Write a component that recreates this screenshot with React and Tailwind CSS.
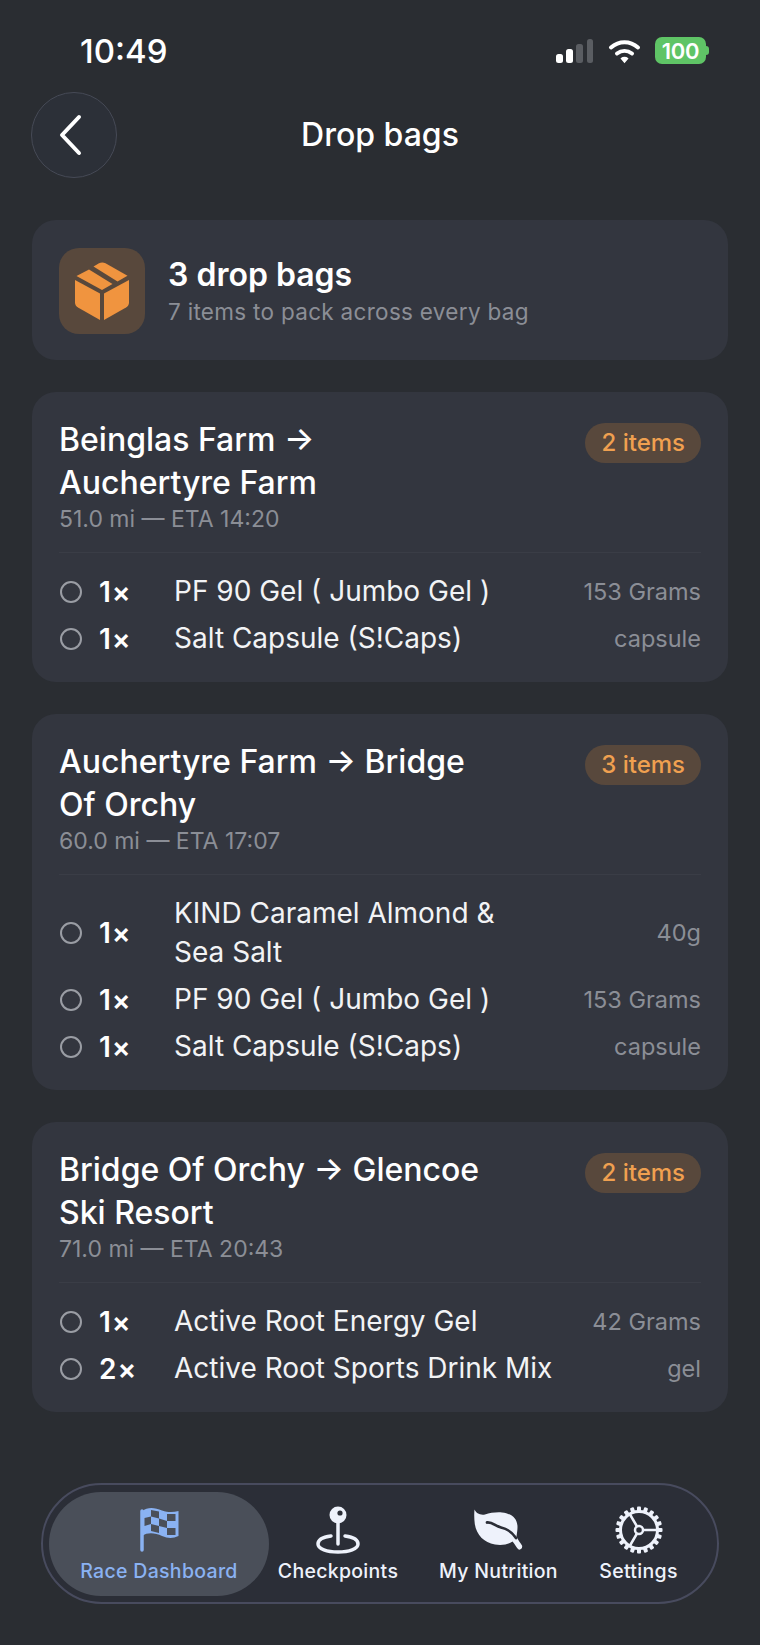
import React from 'react';

const bags = [
  {
    title: 'Beinglas Farm → Auchertyre Farm',
    meta: '51.0 mi — ETA 14:20',
    count: '2 items',
    items: [
      { qty: '1×', name: 'PF 90 Gel ( Jumbo Gel )', unit: '153 Grams' },
      { qty: '1×', name: 'Salt Capsule (S!Caps)', unit: 'capsule' },
    ],
  },
  {
    title: 'Auchertyre Farm → Bridge Of Orchy',
    meta: '60.0 mi — ETA 17:07',
    count: '3 items',
    items: [
      { qty: '1×', name: 'KIND Caramel Almond &\nSea Salt', unit: '40g' },
      { qty: '1×', name: 'PF 90 Gel ( Jumbo Gel )', unit: '153 Grams' },
      { qty: '1×', name: 'Salt Capsule (S!Caps)', unit: 'capsule' },
    ],
  },
  {
    title: 'Bridge Of Orchy → Glencoe Ski Resort',
    meta: '71.0 mi — ETA 20:43',
    count: '2 items',
    items: [
      { qty: '1×', name: 'Active Root Energy Gel', unit: '42 Grams' },
      { qty: '2×', name: 'Active Root Sports Drink Mix', unit: 'gel' },
    ],
  },
];

const StatusIcons = () => (
  <div className="flex items-center gap-[14px]">
    <svg width="38" height="26" viewBox="0 0 38 26">
      <rect x="0" y="16" width="7" height="9" rx="2.5" fill="#fff" />
      <rect x="10" y="11" width="7" height="14" rx="2.5" fill="#fff" />
      <rect x="20" y="6" width="7" height="19" rx="2.5" fill="#5a5d62" />
      <rect x="31" y="1" width="6" height="24" rx="2.5" fill="#5a5d62" />
    </svg>
    <svg width="33" height="26" viewBox="0 0 33 26" fill="none" stroke="#fff" strokeWidth="4" strokeLinecap="round">
      <path d="M3 9.500C11 2.500 22 2.500 30 9.500" />
      <path d="M9 15.500C13.500 12 19.500 12 24 15.500" />
      <path d="M13.500 20.500L16.500 24L19.500 20.500C18 19 15 19 13.500 20.500Z" fill="#fff" strokeWidth="1.500" />
    </svg>
    <div className="flex items-center">
      <div className="w-[51px] h-[27px] rounded-[7px] bg-[#5fc466] flex items-center justify-center text-white text-[22px] font-semibold tracking-[-0.3px] leading-none">
        100
      </div>
      <div className="w-[3px] h-[9px] rounded-r-full bg-[#5fc466]" />
    </div>
  </div>
);

const PackageIcon = () => (
  <svg width="54" height="58" viewBox="0 0 54 58" fill="#f0943f">
    <path d="M18.500 4.500L24 1.200C26 0.200 28.500 0.200 30.500 1.200L52.500 13.800L42.500 19.500Z" />
    <path d="M14 7.500L37.500 22L27 28L1.500 14Z" />
    <path d="M0 18L25 31.500V58L3 45.500C1 44.300 0 42.500 0 40.500Z" />
    <path d="M54 18V40.500C54 42.500 53 44.300 51 45.500L29 58V31.500Z" />
  </svg>
);

const FlagIcon = () => (
  <svg width="40" height="45" viewBox="0 0 40 45">
    <path d="M3 4V43" stroke="#8ab2f2" strokeWidth="3.500" strokeLinecap="round" />
    <path d="M3 4C9 -0.500 16 0.500 23 3.500C29 5.500 34 5.500 39.500 4V29C34 31.500 29 31.500 23 29C16 26 9 25 3 29Z" fill="#8ab2f2" />
    <g fill="#4a4f59">
      <path d="M12 3L20 4.500V11.500L12 9.500Z" />
      <path d="M28 7L36.500 7V14L28 14Z" />
      <path d="M5.500 11L12 9.500V17L5.500 19Z" />
      <path d="M20 11.500L28 14V21L20 19Z" />
      <path d="M12 17L20 19V26L12 24Z" />
      <path d="M28 21L36.500 21V28L28 28Z" />
    </g>
  </svg>
);

const PinIcon = () => (
  <svg width="44" height="48" viewBox="0 0 44 48">
    <circle cx="22" cy="9" r="8.500" fill="#eef2fb" />
    <circle cx="24" cy="7" r="2.600" fill="#2b2e37" />
    <path d="M22 16V38" stroke="#eef2fb" strokeWidth="3.500" strokeLinecap="round" />
    <path d="M15 30C7 31 2 34 2 38C2 43 11 46 22 46C33 46 42 43 42 38C42 34 37 31 29 30" fill="none" stroke="#eef2fb" strokeWidth="3.500" strokeLinecap="round" />
  </svg>
);

const LeafIcon = () => (
  <svg width="49" height="42" viewBox="0 0 49 42">
    <path d="M0.500 0.500C2 4 6 6.500 11 5.500C16 4 22 3 28 3.500C37 4.500 43.500 9 43.500 18C43.500 21 43 24 42.500 27.500C44 31 46.500 34 48 36.500C49 39 46 42 44 40C42 38 40.500 34.500 38.500 32.500C34 35.500 28 36.500 21 35.500C10 33.500 2.500 26 0.800 15C0.200 10 0 5 0.500 0.500Z" fill="#eef2fb" />
    <path d="M13 13.500C19 13 21 17 27 18.500C33 20 37 22 42 29" fill="none" stroke="#2b2e37" strokeWidth="2.800" strokeLinecap="round" />
  </svg>
);

const GearIcon = () => {
  const teeth = Array.from({ length: 20 }, (_, i) => i * 18);
  return (
    <svg width="48" height="48" viewBox="0 0 48 48" fill="none" stroke="#eef2fb">
      <circle cx="24" cy="24" r="18.500" strokeWidth="3" />
      {teeth.map((deg) => (
        <rect key={deg} x="22" y="0.500" width="4" height="5" rx="1" fill="#eef2fb" stroke="none" transform={`rotate(${deg} 24 24)`} />
      ))}
      <circle cx="24" cy="24" r="4" strokeWidth="2.500" />
      <path d="M28 24H42M22 20.500L15 8.500M22 27.500L15 39.500" strokeWidth="2.500" />
    </svg>
  );
};

const BagCard = ({ bag }) => (
  <div className="rounded-[24px] bg-[#33363f] px-[27px] pt-[26px] pb-[24px]">
    <div className="flex justify-between items-start pb-[19px] border-b border-[#3a3d46]">
      <div>
        <div className="w-[425px] text-[32px] leading-[43px] font-medium text-white">{bag.title}</div>
        <div className="text-[23px] leading-[28px] text-[#8b8e96] mt-[1px]">{bag.meta}</div>
      </div>
      <div className="mt-[5px] h-[40px] px-[16px] rounded-full bg-[#58483c] text-[#f0a050] text-[24px] font-medium flex items-center">
        {bag.count}
      </div>
    </div>
    <div className="pt-[19px] flex flex-col gap-[8px]">
      {bag.items.map((item) => (
        <div key={item.name} className="flex items-center min-h-[39px]">
          <div className="w-[22px] h-[22px] rounded-full border-2 border-[#9a9da4] shrink-0 ml-[1px]" />
          <div className="w-[92px] pl-[17px] text-[28px] leading-none font-semibold tracking-[1px] text-white shrink-0">{item.qty}</div>
          <div className="w-[385px] text-[28px] leading-[39px] text-[#f2f3f5] whitespace-pre-line">{item.name}</div>
          <div className="ml-auto text-[23.500px] text-[#8b8e96]">{item.unit}</div>
        </div>
      ))}
    </div>
  </div>
);

const NavItem = ({ icon, label, className, labelClass = 'text-[#eef2fb]' }) => (
  <div className={`h-[104px] pb-[13px] flex flex-col items-center justify-end ${className}`}>
    <div className="h-[50px] flex items-center justify-center">{icon}</div>
    <div className={`mt-[4px] text-[19.500px] leading-[24px] font-medium tracking-[0.3px] whitespace-nowrap ${labelClass}`}>{label}</div>
  </div>
);

export default function App() {
  return (
    <div className="w-[760px] h-[1645px] bg-[#2a2d32] flex flex-col overflow-hidden" style={{ fontFamily: 'Inter, sans-serif' }}>
      {/* Status bar */}
      <div className="h-[92px] pt-[32px] pl-[80px] pr-[51px] flex items-start justify-between">
        <div className="text-[33px] leading-[38px] font-medium text-white">10:49</div>
        <div className="pt-[5px]"><StatusIcons /></div>
      </div>

      {/* Header */}
      <div className="relative h-[86px] mx-[31px] flex items-center justify-center">
        <div className="absolute left-0 top-0 w-[86px] h-[86px] rounded-full border border-[#464a56] bg-[#2c3038] flex items-center justify-center">
          <svg width="30" height="42" viewBox="0 0 30 42" fill="none" stroke="#fff" strokeWidth="4" strokeLinecap="round" strokeLinejoin="round" className="mr-[8px]">
            <path d="M24 3L7 21L24 39" />
          </svg>
        </div>
        <div className="text-[32px] font-medium text-white">Drop bags</div>
      </div>

      <div className="mt-[42px] px-[32px] flex flex-col gap-[32px]">
        {/* Summary */}
        <div className="h-[140px] pt-[2px] rounded-[24px] bg-[#33363f] pl-[27px] flex items-center gap-[23px]">
          <div className="w-[86px] h-[86px] rounded-[20px] bg-[#58483c] flex items-center justify-center">
            <PackageIcon />
          </div>
          <div>
            <div className="text-[32px] leading-[38px] font-semibold text-white">3 drop bags</div>
            <div className="text-[22.500px] leading-[30px] mt-[3px] tracking-[0.3px] text-[#8b8e96]">7 items to pack across every bag</div>
          </div>
        </div>

        {bags.map((bag) => (
          <BagCard key={bag.title} bag={bag} />
        ))}
      </div>

      {/* Bottom nav */}
      <div className="mt-auto mb-[41px] mx-[41px] h-[121px] rounded-full border-2 border-[#484b5e] bg-[#2b2e37] flex items-center pl-[6px]">
        <NavItem className="w-[220px] rounded-full bg-[#4a4f59]" icon={<FlagIcon />} label="Race Dashboard" labelClass="text-[#8ab2f2]" />
        <NavItem className="w-[138px]" icon={<PinIcon />} label="Checkpoints" />
        <NavItem className="w-[183px]" icon={<LeafIcon />} label="My Nutrition" />
        <NavItem className="w-[97px]" icon={<GearIcon />} label="Settings" />
      </div>
    </div>
  );
}
